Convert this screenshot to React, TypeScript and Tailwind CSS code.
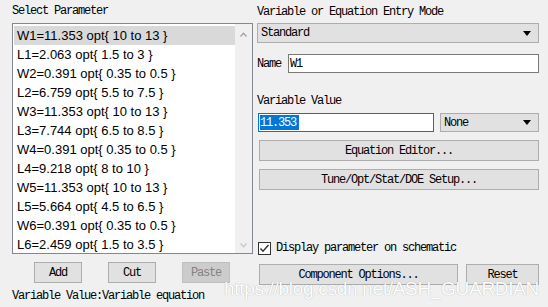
const params = [
  "W1=11.353 opt{ 10 to 13 }",
  "L1=2.063 opt{ 1.5 to 3 }",
  "W2=0.391 opt{ 0.35 to 0.5 }",
  "L2=6.759 opt{ 5.5 to 7.5 }",
  "W3=11.353 opt{ 10 to 13 }",
  "L3=7.744 opt{ 6.5 to 8.5 }",
  "W4=0.391 opt{ 0.35 to 0.5 }",
  "L4=9.218 opt{ 8 to 10 }",
  "W5=11.353 opt{ 10 to 13 }",
  "L5=5.664 opt{ 4.5 to 6.5 }",
  "W6=0.391 opt{ 0.35 to 0.5 }",
  "L6=2.459 opt{ 1.5 to 3.5 }",
];

const mono = "font-['Liberation_Mono',monospace] text-[12px] tracking-[-1.2px] leading-[14px] text-black";

function Arrow() {
  return (
    <svg width="8" height="5" viewBox="0 0 8 5" className="shrink-0">
      <path d="M0 0H8L4 5Z" fill="#000" />
    </svg>
  );
}

function Btn({ label, className = "", disabled = false }: { label: string; className?: string; disabled?: boolean }) {
  return (
    <div
      className={`flex h-[21px] items-center justify-center border ${
        disabled ? "border-[#bfbfbf] bg-[#cccccc] text-[#838383]" : "border-[#adadad] bg-[#e1e1e1] text-black"
      } font-['Liberation_Mono',monospace] text-[12px] tracking-[-1.2px] ${className}`}
    >
      {label}
    </div>
  );
}

export default function App() {
  return (
    <div className="relative flex h-[307px] w-[548px] overflow-hidden bg-[#f0f0f0] pl-[12px]">
      {/* left column */}
      <div className="flex w-[241px] flex-col pt-[4px]">
        <div className={mono}>Select Parameter</div>
        <div className="mt-[5px] flex h-[231px] border border-[#828790] bg-white">
          <div className="flex-1 pl-px pt-[2px]">
            {params.map((p, i) => (
              <div
                key={p}
                className={`flex h-[19px] items-center pl-[3px] font-['Liberation_Sans',sans-serif] text-[13px] text-black ${
                  i === 0 ? "bg-[#d9d9d9]" : ""
                }`}
              >
                {p}
              </div>
            ))}
          </div>
          <div className="flex w-[17px] flex-col items-center justify-between bg-[#f0f0f0] pb-[5px] pt-[8px]">
            <svg width="7" height="5" viewBox="0 0 7 5">
              <path d="M0.5 4.5L3.5 1.2L6.5 4.5" fill="none" stroke="#a3a3a3" strokeWidth="1.3" />
            </svg>
            <svg width="7" height="5" viewBox="0 0 7 5">
              <path d="M0.5 0.5L3.5 3.8L6.5 0.5" fill="none" stroke="#c9c9c9" strokeWidth="1.3" />
            </svg>
          </div>
        </div>
        <div className="mt-[8px] flex gap-[26px] pl-[22px]">
          <Btn label="Add" className="w-[48px]" />
          <Btn label="Cut" className="w-[48px]" />
          <Btn label="Paste" className="w-[48px]" disabled />
        </div>
        <div className={`mt-[6px] ${mono}`}>Variable Value:Variable equation</div>
      </div>

      {/* right column */}
      <div className="ml-[4px] flex w-[282px] flex-col pt-[5px]">
        <div className={mono}>Variable or Equation Entry Mode</div>
        <div className="mt-[4px] flex h-[20px] items-center justify-between border border-[#adadad] bg-[#e1e1e1] pl-[3px] pr-[7px]">
          <span className="font-['Liberation_Mono',monospace] text-[12px] tracking-[-1.2px]">Standard</span>
          <Arrow />
        </div>
        <div className="mt-[11px] flex h-[19px] items-center gap-[7px]">
          <span className={mono}>Name</span>
          <div className="flex h-[19px] flex-1 items-center border border-[#7a7a7a] bg-white pl-[1px] font-['Liberation_Mono',monospace] text-[12px] tracking-[-1.2px]">
            W1
          </div>
        </div>
        <div className={`mt-[21px] ${mono}`}>Variable Value</div>
        <div className="mt-[5px] flex h-[19px] gap-[6px] pl-px">
          <div className="flex w-[176px] items-center border border-[#0078d7] bg-white pl-px">
            <span className="flex h-[15px] w-[39px] items-center bg-[#0078d7] font-['Liberation_Mono',monospace] text-[12px] tracking-[-1.2px] text-white">
              11.353
            </span>
          </div>
          <div className="flex flex-1 items-center justify-between border border-[#adadad] bg-[#e1e1e1] pl-[3px] pr-[7px]">
            <span className="font-['Liberation_Mono',monospace] text-[12px] tracking-[-1.2px]">None</span>
            <Arrow />
          </div>
        </div>
        <Btn label="Equation Editor..." className="ml-[2px] mt-[8px]" />
        <Btn label="Tune/Opt/Stat/DOE Setup..." className="ml-[2px] mt-[8px]" />
        <div className="mt-[51px] flex items-center gap-[5px] pl-px">
          <div className="flex h-[13px] w-[13px] items-center justify-center border border-[#333] bg-white">
            <svg width="11" height="11" viewBox="0 0 11 11">
              <path d="M1.5 5.5L4 8.2L9.5 2" fill="none" stroke="#333" strokeWidth="1.4" />
            </svg>
          </div>
          <span className={mono}>Display parameter on schematic</span>
        </div>
        <div className="ml-[2px] mt-[9px] flex gap-[8px]">
          <Btn label="Component Options..." className="w-[199px]" />
          <Btn label="Reset" className="flex-1" />
        </div>
      </div>

      <div className="pointer-events-none absolute right-[9px] top-[279px] font-['Liberation_Sans',sans-serif] text-[19px] leading-[20px] tracking-[-0.3px] text-white [text-shadow:0_0_1px_rgba(0,0,0,0.35)]">
        https://blog.csdn.net/ASH_GUARDIAN
      </div>
    </div>
  );
}
